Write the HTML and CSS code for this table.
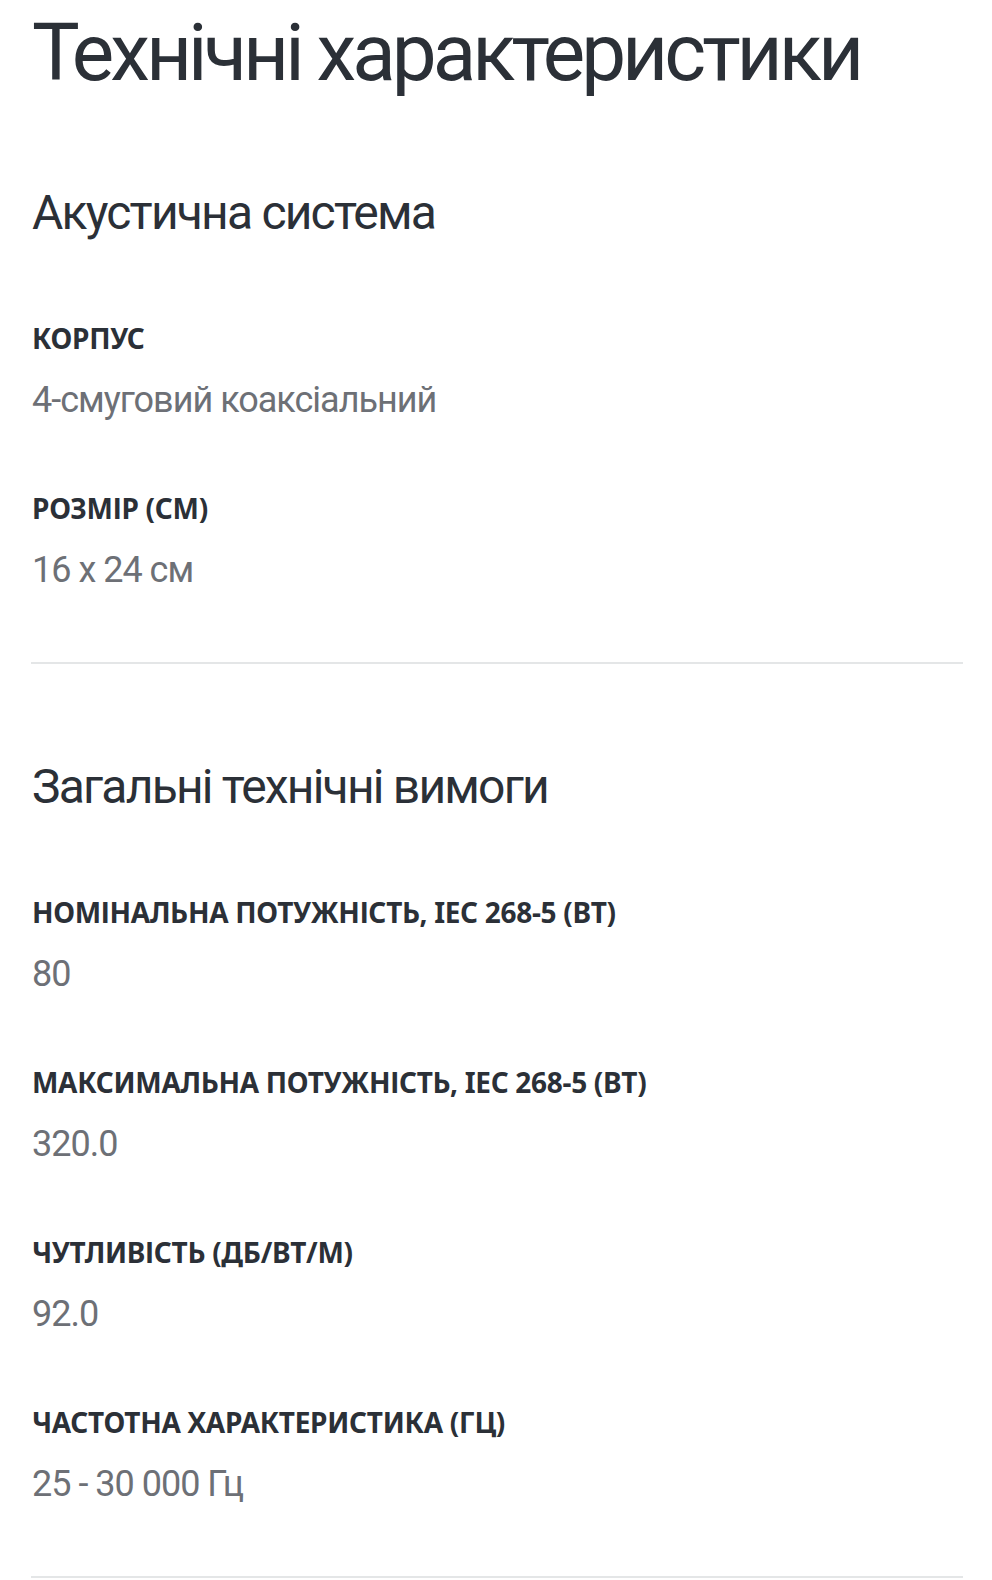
FILE: index.html
```html
<!DOCTYPE html>
<html lang="uk">
<head>
<meta charset="utf-8">
<title>Технічні характеристики</title>
<link rel="stylesheet" href="styles.css">
</head>
<body>
<main class="specs">
  <h1 class="specs-title">Технічні характеристики</h1>

  <section class="spec-group">
    <h2 class="group-title">Акустична система</h2>
    <dl class="spec-list">
      <div class="spec-item">
        <dt class="spec-label">Корпус</dt>
        <dd class="spec-value">4-смуговий коаксіальний</dd>
      </div>
      <div class="spec-item">
        <dt class="spec-label">Розмір (см)</dt>
        <dd class="spec-value">16 x 24 см</dd>
      </div>
    </dl>
  </section>

  <section class="spec-group">
    <h2 class="group-title">Загальні технічні вимоги</h2>
    <dl class="spec-list">
      <div class="spec-item">
        <dt class="spec-label">Номінальна потужність, IEC 268-5 (Вт)</dt>
        <dd class="spec-value">80</dd>
      </div>
      <div class="spec-item">
        <dt class="spec-label">Максимальна потужність, IEC 268-5 (Вт)</dt>
        <dd class="spec-value">320.0</dd>
      </div>
      <div class="spec-item">
        <dt class="spec-label">Чутливість (дБ/Вт/м)</dt>
        <dd class="spec-value">92.0</dd>
      </div>
      <div class="spec-item">
        <dt class="spec-label">Частотна характеристика (Гц)</dt>
        <dd class="spec-value">25 - 30 000 Гц</dd>
      </div>
    </dl>
  </section>
</main>
</body>
</html>
```

FILE: styles.css
```css
html, body {
  margin: 0;
  padding: 0;
  background: #ffffff;
}

body {
  font-family: "Noto Sans", "Open Sans", sans-serif;
  color: #2b3037;
}

.specs {
  padding: 5px 29px 0 31px;
}

.specs-title {
  margin: 0;
  padding-left: 1px;
  font-family: Roboto, "Noto Sans", sans-serif;
  font-size: 80px;
  line-height: 96px;
  font-weight: 400;
  letter-spacing: -4px;
  white-space: nowrap;
  color: #2b3037;
}

.spec-group {
  margin-top: 82px;
  padding-left: 1px;
  padding-bottom: 68px;
  border-bottom: 2px solid #e4e6e7;
}

.spec-group + .spec-group {
  margin-top: 93px;
}

.group-title {
  margin: 0;
  font-family: Roboto, "Noto Sans", sans-serif;
  font-size: 48px;
  line-height: 60px;
  font-weight: 400;
  letter-spacing: -1.8px;
  color: #2b3037;
}

.spec-list {
  margin: 77px 0 0;
  display: flex;
  flex-direction: column;
  gap: 66px;
}

.spec-item {
  display: flex;
  flex-direction: column;
  gap: 20px;
}

.spec-label {
  margin: 0;
  font-size: 28px;
  line-height: 36px;
  font-weight: 700;
  letter-spacing: -0.3px;
  text-transform: uppercase;
  color: #2b3037;
}

.spec-value {
  margin: 0;
  font-family: Roboto, "Noto Sans", sans-serif;
  font-size: 36px;
  line-height: 48px;
  font-weight: 400;
  letter-spacing: -1px;
  color: #6d7076;
}
```
